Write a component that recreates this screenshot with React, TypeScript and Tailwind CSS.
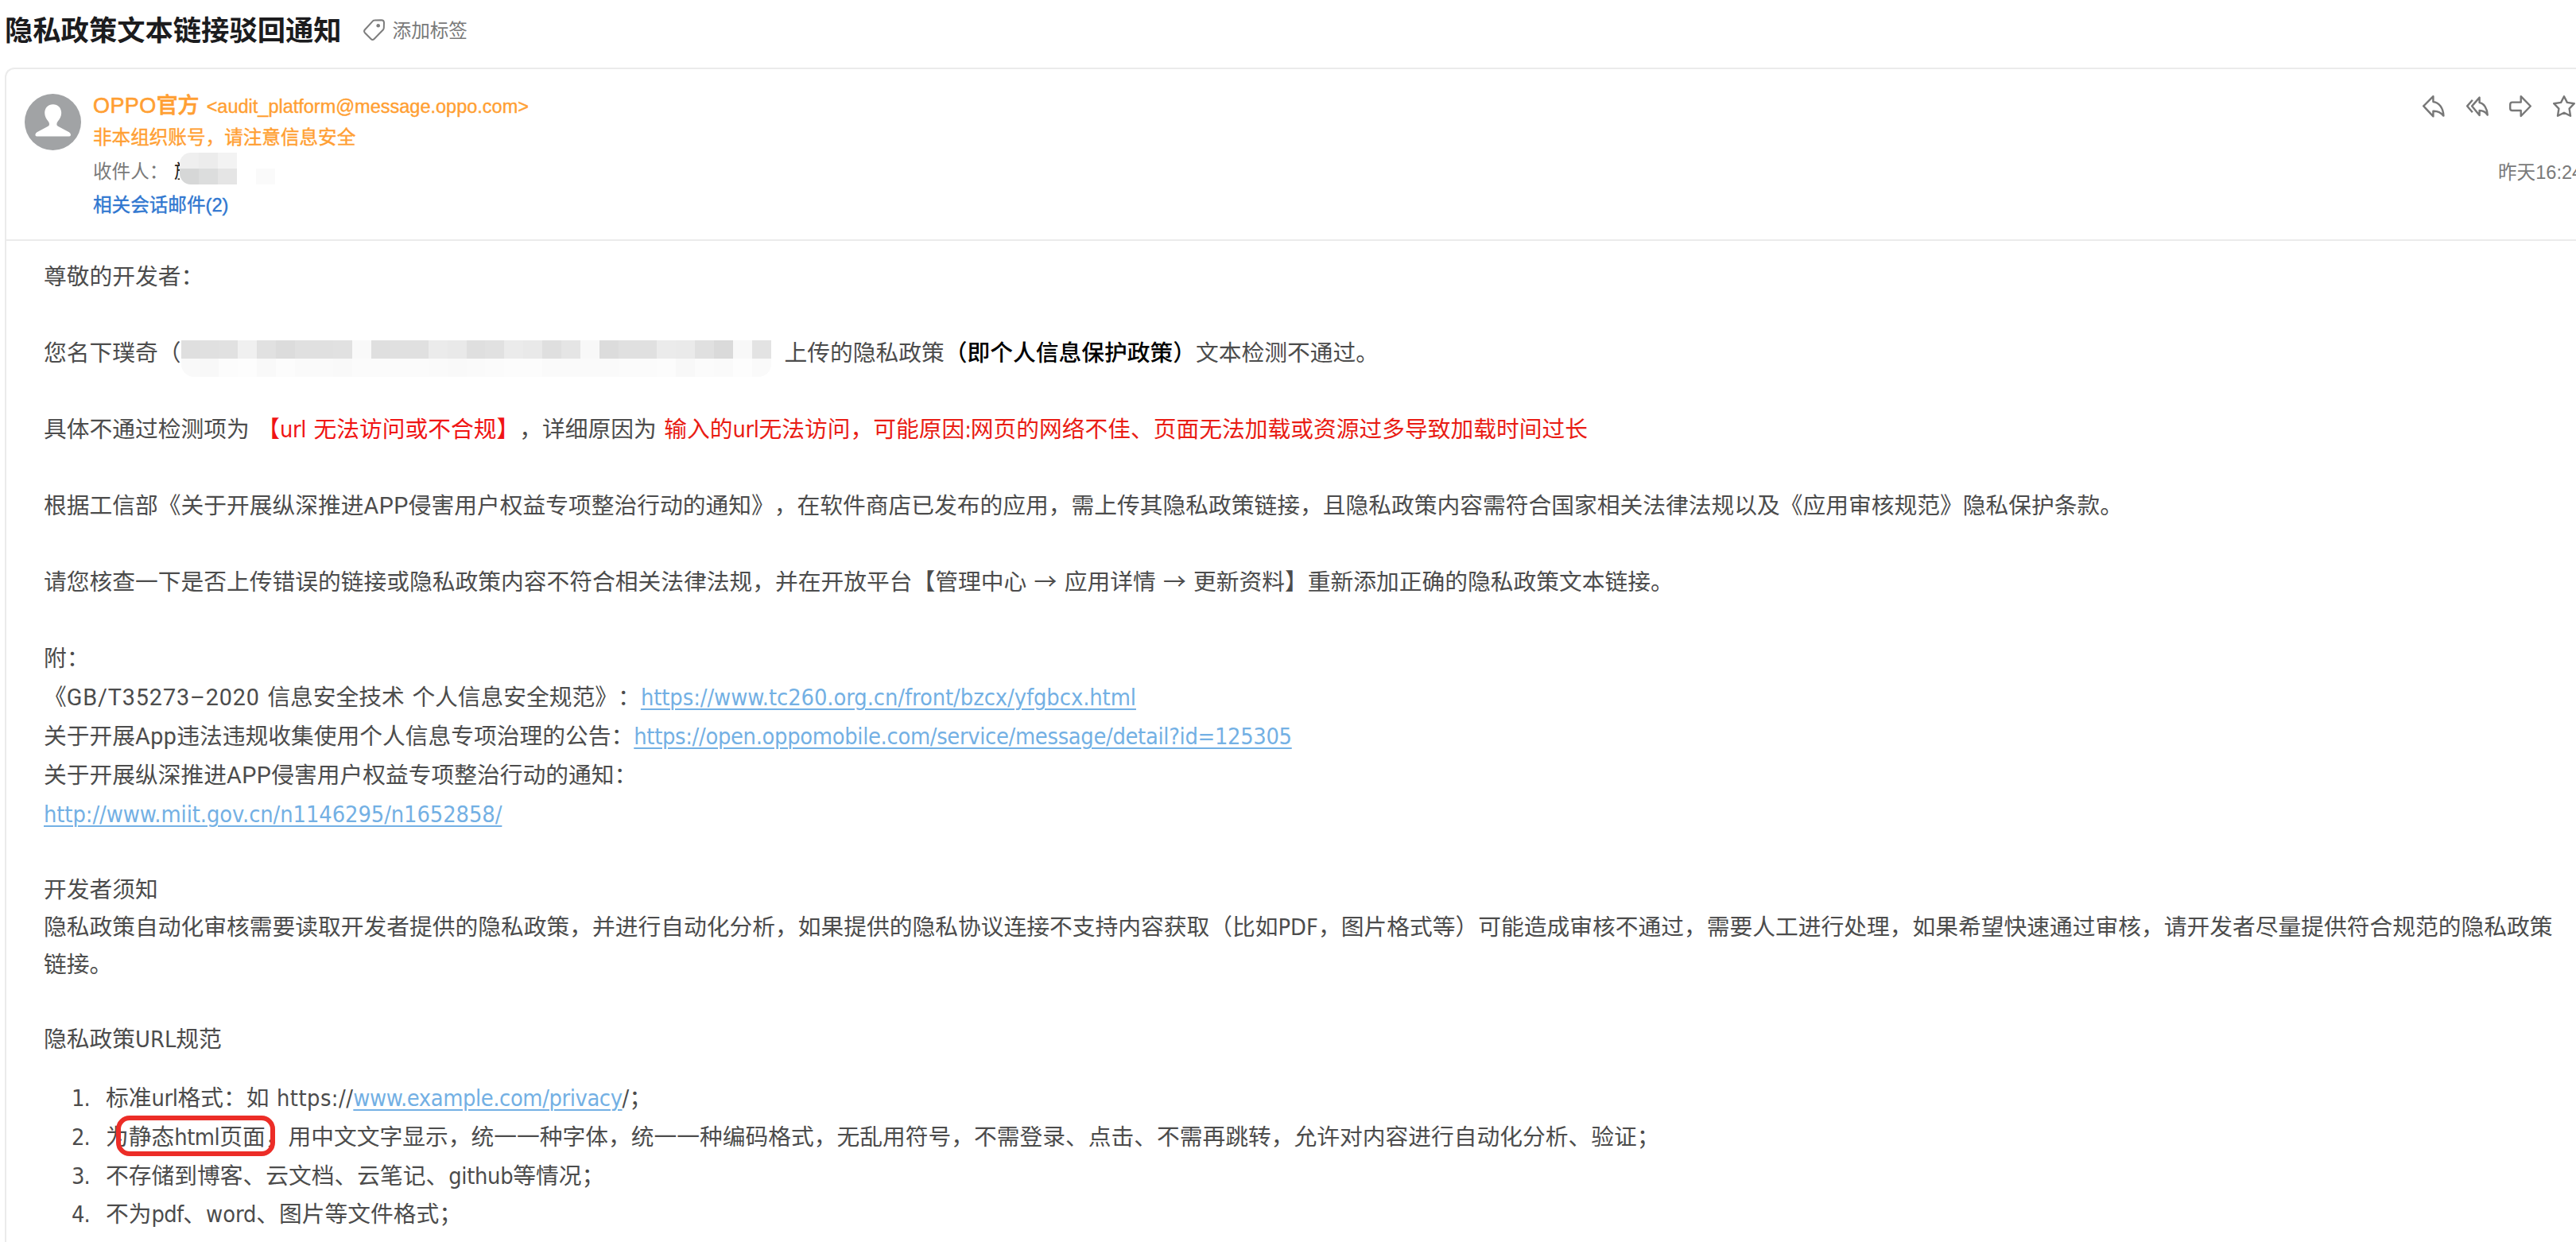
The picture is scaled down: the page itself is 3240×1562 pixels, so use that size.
import type { ReactNode } from "react";
import clsx from "clsx";

const maskTop = [
  "bg-[#dfdfdf]", "bg-[#e0e0e0]", "bg-[#e1e1e1]", "bg-[#f0f0f0]", "bg-[#e1e1e1]", "bg-[#dcdcdc]", "bg-[#e0e0e0]", "bg-[#e0e0e0]",
  "bg-[#e1e1e1]", "bg-[#f9f9f9]", "bg-[#dfdfdf]", "bg-[#e0e0e0]", "bg-[#e0e0e0]", "bg-[#ebebeb]", "bg-[#e9e9e9]", "bg-[#dfdfdf]",
  "bg-[#e1e1e1]", "bg-[#ebebeb]", "bg-[#e9e9e9]", "bg-[#dfdfdf]", "bg-[#e5e5e5]", "bg-[#f8f8f8]", "bg-[#dcdcdc]", "bg-[#e0e0e0]",
  "bg-[#e0e0e0]", "bg-[#ebebeb]", "bg-[#eaeaea]", "bg-[#e0e0e0]", "bg-[#dadada]", "bg-[#f8f8f8]", "bg-[#e3e3e3]",
];

const maskBottom = [
  "bg-[#f9f9f9]", "bg-[#f8f8f8]", "bg-[#fcfcfc]", "bg-[#fdfdfd]", "bg-[#f9f9f9]", "bg-[#fcfcfc]", "bg-[#fafafa]", "bg-[#fafafa]",
  "bg-[#f9f9f9]", "bg-[#fbfbfb]", "bg-[#fbfbfb]", "bg-[#fbfbfb]", "bg-[#fbfbfb]", "bg-[#fafafa]", "bg-[#f9f9f9]", "bg-[#fafafa]",
  "bg-[#fbfbfb]", "bg-[#fcfcfc]", "bg-[#fcfcfc]", "bg-[#fafafa]", "bg-[#fafafa]", "bg-[#fafafa]", "bg-[#fafafa]", "bg-[#fbfbfb]",
  "bg-[#fbfbfb]", "bg-[#fcfcfc]", "bg-[#f8f8f8]", "bg-[#fbfbfb]", "bg-[#fafafa]", "bg-[#fdfdfd]", "bg-[#fafafa]",
];

// Latin runs inside the Chinese mail body
const Latin = ({ children, className }: { children: ReactNode; className?: string }) => (
  <span className={clsx("font-['DejaVu_Sans_Condensed','DejaVu_Sans',sans-serif]", className)}>
    {children}
  </span>
);

const MailLink = ({ children, className }: { children: ReactNode; className?: string }) => (
  <a
    className={clsx(
      "font-['DejaVu_Sans_Condensed','DejaVu_Sans',sans-serif] text-[#73b0e4] underline decoration-2 underline-offset-[4px]",
      className,
    )}
  >
    {children}
  </a>
);

const Space = () => <span className="inline-block w-[9.5px]"> </span>;

const TagIcon = () => (
  <svg width="27" height="27" viewBox="0 0 27 27" fill="none" stroke="#7d7d7d" strokeWidth="2">
    <path d="M14 1.4 L22.5 1.2 Q26 1.2 26 4.5 L25.8 11 Q25.7 12.5 24.8 13.5 L13.6 25 Q11.6 27 9.6 25 L1.9 17.2 Q0.2 15.2 2 13.3 L12 2.3 Q12.8 1.4 14 1.4 Z" />
    <circle cx="18.7" cy="8.3" r="2.3" fill="#7d7d7d" stroke="none" />
  </svg>
);

const Avatar = () => (
  <svg className="mt-[31px] ml-[23px] shrink-0" width="71" height="71" viewBox="0 0 71 71">
    <circle cx="35.5" cy="35.5" r="35.5" fill="#a1a3a5" />
    <path
      fill="#fff"
      d="M35.7 13.2 C29.5 13.2 25.2 17.6 25.2 24 C25.2 28 27.2 31.5 29.6 34.5 C31.5 37 31.6 39.6 29.5 40.8 L15.5 48.3 Q13.4 49.5 13.4 51.5 Q13.4 53.5 15.2 53.5 L56.2 53.5 Q58 53.5 58 51.5 Q58 49.5 55.9 48.3 L41.9 40.8 C39.8 39.6 39.9 37 41.8 34.5 C44.2 31.5 46.2 28 46.2 24 C46.2 17.6 41.9 13.2 35.7 13.2 Z"
    />
  </svg>
);

const actionPaths = [
  "M1.2 13.4 L13.4 1.2 V8 C21 9 26 16 26.4 25.6 C22 20.6 18 19.5 13.4 19.8 V26.4 Z",
  "M7.2 13.4 L16.6 2.6 V9 C22.5 10 26.5 17 26.7 24.6 C24 20.4 20.5 19 16.6 19 V25 Z M7.8 5.7 L1.2 13.4 L7.8 21.3",
  "M3.8 8.6 H14.7 V1.2 L26.8 13.5 L14.7 26 V19 H3.8 Q1.2 19 1.2 16.2 V11.4 Q1.2 8.6 3.8 8.6 Z",
  "M14 1.2 L17.9 8.9 L26.8 10.2 L20.6 16.6 L22 25.8 L14 21.8 L6 25.8 L7.4 16.6 L1.2 10.2 L10.1 8.9 Z",
];

const App = () => {
  return (
    <div className="h-screen w-full overflow-hidden bg-white font-['Noto_Sans_CJK_SC',sans-serif] whitespace-nowrap [text-spacing-trim:space-all]">
      <div className="flex h-[72px] items-center pl-[6px]">
        <h1 className="text-[35.3px] leading-[48px] font-bold text-[#1c1c1e]">隐私政策文本链接驳回通知</h1>
        <div className="ml-[27px] flex items-center gap-[10px] pt-[2px] text-[23.6px] leading-8 text-[#7a7a7a]">
          <TagIcon />
          <span>添加标签</span>
        </div>
      </div>

      <div className="mt-[13px] ml-[6px] h-[1500px] rounded-tl-[12px] border-t-2 border-l-2 border-[#ebebeb]">
        <div className="flex h-[216px] border-b-2 border-[#ebebeb]">
          <Avatar />
          <div className="ml-[15px] pt-[24px] text-[23.6px]">
            <div className="flex h-10 items-baseline text-[#ff9f33] leading-10">
              <span className="text-[27px] font-medium [-webkit-text-stroke:0.6px_#ff9f33]">
                <span className="font-['Liberation_Sans',sans-serif] tracking-[0.4px]">OPPO</span>
                官方
              </span>
              <span className="ml-[9px] font-['Liberation_Sans',sans-serif] text-[23.5px] [-webkit-text-stroke:0.4px_#ff9f33]">
                &lt;audit_platform@message.oppo.com&gt;
              </span>
            </div>
            <div className="mt-px h-[38px] leading-[38px] text-[#ff9f33] [-webkit-text-stroke:0.4px_#ff9f33]">非本组织账号，请注意信息安全</div>
            <div className="flex h-[46px] leading-[48px] text-[#7a7a7a]">
              <span className="w-[102px]">收件人：</span>
              <span className="w-[7px] overflow-hidden text-[#222]">旋</span>
              <div className="mt-[2px] grid h-10 w-[72px] grid-cols-3 overflow-hidden rounded-l-[14px]">
                <span className="bg-[#efefef]" />
                <span className="bg-[#ececec]" />
                <span className="bg-[#f3f3f3]" />
                <span className="bg-[#d6d7d7]" />
                <span className="bg-[#dcdddd]" />
                <span className="bg-[#e5e5e5]" />
              </div>
              <span className="mt-[22px] ml-[24px] h-5 w-6 bg-[#fafafa]" />
            </div>
            <div className="h-[42px] leading-[41px] text-[#2f77d0] [-webkit-text-stroke:0.4px_#2f77d0]">
              相关会话邮件<span className="font-['Liberation_Sans',sans-serif]">(2)</span>
            </div>
          </div>
          <div className="ml-auto flex flex-col items-end pt-[33px]">
            <div className="flex gap-[26.7px] pr-px">
              {actionPaths.map((d) => (
                <svg key={d} width="28" height="28" viewBox="0 0 28 28" fill="none" stroke="#777" strokeWidth="2.4" strokeLinejoin="round">
                  <path d={d} />
                </svg>
              ))}
            </div>
            <div className="mt-[47px] h-10 w-[98px] overflow-hidden text-[23.6px] leading-10 text-[#7a7a7a]">
              昨天<span className="font-['Liberation_Sans',sans-serif]">16:24</span>
            </div>
          </div>
        </div>

        <div className="pt-[19px] pl-[47px] text-[28.75px] text-[#4c4c4c]">
          <div className="flex flex-col gap-12 leading-12">
            <p className="h-12">尊敬的开发者：</p>
            <div className="flex h-12">
              <span>您名下璞奇（</span>
              <div className="mt-[10px] grid h-[46px] w-[742px] grid-cols-[repeat(31,minmax(0,1fr))] overflow-hidden rounded-b-[16px]">
                {[...maskTop, ...maskBottom].map((c, i) => (
                  <span key={i} className={c} />
                ))}
              </div>
              <p className="ml-[17px]">
                上传的隐私政策<span className="font-medium text-black">（即个人信息保护政策）</span>文本检测不通过。
              </p>
            </div>
            <p className="h-12">
              具体不通过检测项为
              <Space />
              <span className="text-[#f01414]">
                【<Latin className="tracking-[-0.4px]">url</Latin>
                <Space />
                无法访问或不合规】
              </span>
              ，详细原因为
              <Space />
              <span className="text-[#e91c14]">
                输入的<Latin className="tracking-[-0.4px]">url</Latin>无法访问，可能原因
                <Latin className="tracking-[-1.2px]">:</Latin>
                网页的网络不佳、页面无法加载或资源过多导致加载时间过长
              </span>
            </p>
            <p className="h-12">
              根据工信部《关于开展纵深推进<span className="font-[Roboto,sans-serif] tracking-[0.4px]">APP</span>
              侵害用户权益专项整治行动的通知》，在软件商店已发布的应用，需上传其隐私政策链接，且隐私政策内容需符合国家相关法律法规以及《应用审核规范》隐私保护条款。
            </p>
            <p className="h-12">
              请您核查一下是否上传错误的链接或隐私政策内容不符合相关法律法规，并在开放平台【管理中心
              <span className="inline-block w-[47.4px] text-center">→</span>
              应用详情
              <span className="inline-block w-[47.4px] text-center">→</span>
              更新资料】重新添加正确的隐私政策文本链接。
            </p>
          </div>

          <div className="mt-12 leading-[49px]">
            <p className="h-[49px] leading-12">附：</p>
            <p className="h-[49px] leading-12">
              《<span className="font-[Roboto,sans-serif] tracking-[0.88px]">GB/T35273–2020</span>
              <Space />
              信息安全技术
              <Space />
              个人信息安全规范》：
              <MailLink className="tracking-[-0.06px]">https://www.tc260.org.cn/front/bzcx/yfgbcx.html</MailLink>
            </p>
            <p className="h-[49px] leading-12">
              关于开展<span className="font-[Roboto,sans-serif] tracking-[0.4px]">App</span>
              违法违规收集使用个人信息专项治理的公告：
              <MailLink className="tracking-[-0.32px]">https://open.oppomobile.com/service/message/detail?id=125305</MailLink>
            </p>
            <p className="h-[49px] leading-12">
              关于开展纵深推进<span className="font-[Roboto,sans-serif] tracking-[0.4px]">APP</span>
              侵害用户权益专项整治行动的通知：
            </p>
            <p className="h-[49px] leading-12">
              <MailLink className="tracking-[-0.08px]">http://www.miit.gov.cn/n1146295/n1652858/</MailLink>
            </p>
          </div>

          <div className="mt-[46px] leading-[47px]">
            <p className="h-[47px]">开发者须知</p>
            <p className="h-[47px]">
              隐私政策自动化审核需要读取开发者提供的隐私政策，并进行自动化分析，如果提供的隐私协议连接不支持内容获取（比如
              <Latin>PDF</Latin>
              ，图片格式等）可能造成审核不通过，需要人工进行处理，如果希望快速通过审核，请开发者尽量提供符合规范的隐私政策
            </p>
            <p className="h-[47px]">链接。</p>
            <p className="mt-[47px] h-[47px]">
              隐私政策<Latin>URL</Latin>规范
            </p>
          </div>

          <ol className="mt-[26px] pl-[35px] leading-[49px]">
            <li className="flex h-[49px] items-baseline">
              <Latin className="w-[43px] tracking-[-1px]">1.</Latin>
              <p>
                标准<Latin className="tracking-[-0.4px]">url</Latin>格式：如
                <Space />
                <Latin className="tracking-[0.45px]">https://</Latin>
                <MailLink className="tracking-[-0.4px]">www.example.com/privacy</MailLink>
                <Latin>/</Latin>；
              </p>
            </li>
            <li className="relative flex h-[49px] items-baseline">
              <Latin className="w-[43px] tracking-[-1px]">2.</Latin>
              <p>
                为静态<Latin className="tracking-[-0.5px]">html</Latin>
                页面，用中文文字显示，统一一种字体，统一一种编码格式，无乱用符号，不需登录、点击、不需再跳转，允许对内容进行自动化分析、验证；
              </p>
              <span className="absolute top-0 left-[56px] h-[51px] w-[200px] rounded-[17px] border-[6px] border-[#ec2d27]" />
            </li>
            <li className="flex h-[49px] items-baseline">
              <Latin className="w-[43px] tracking-[-1px]">3.</Latin>
              <p>
                不存储到博客、云文档、云笔记、<Latin className="tracking-[-0.33px]">github</Latin>等情况；
              </p>
            </li>
            <li className="flex h-[49px] items-baseline leading-12">
              <Latin className="w-[43px] tracking-[-1px]">4.</Latin>
              <p>
                不为<Latin className="tracking-[-0.7px]">pdf</Latin>、<Latin className="tracking-[-0.1px]">word</Latin>
                、图片等文件格式；
              </p>
            </li>
          </ol>
        </div>
      </div>
    </div>
  );
};

export default App;
